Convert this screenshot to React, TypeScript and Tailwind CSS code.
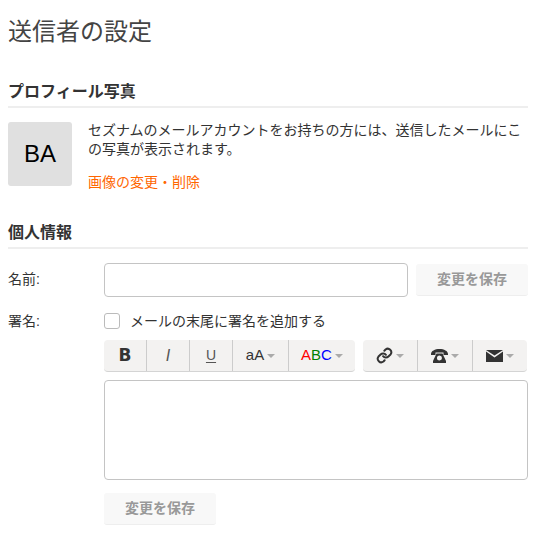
import React from "react";

const Caret = () => (
  <span className="ml-[3px] inline-block h-0 w-0 border-x-[4px] border-t-[4px] border-x-transparent border-t-[#aaaaaa]" />
);

const ToolBtn = ({ w, children, last }: { w: string; children: React.ReactNode; last?: boolean }) => (
  <div className={`flex h-full items-center justify-center ${w} ${last ? "" : "border-r border-[#cccccc]"}`}>{children}</div>
);

export default function App() {
  return (
    <div className="h-[536px] w-[536px] overflow-hidden bg-white pl-2 pr-2 text-[14px] text-[#333333] [font-family:'Liberation_Sans','Noto_Sans_CJK_JP',sans-serif]">
      <h1 className="pt-[17px] text-[24px] leading-[30px] font-normal text-[#444444]">送信者の設定</h1>

      <h2 className="mt-[32px] border-b-2 border-[#eeeeee] pb-[2px] text-[16px] leading-[25px] font-bold">プロフィール写真</h2>
      <div className="mt-[14px] flex gap-4">
        <div className="flex h-16 w-16 shrink-0 items-center justify-center rounded-[3px] bg-[#e0e0e0] text-[24px] text-black">BA</div>
        <div className="-mt-[1px]">
          <p className="leading-[19px]">セズナムのメールアカウントをお持ちの方には、送信したメールにこの写真が表示されます。</p>
          <p className="mt-[13px] leading-[20px] text-[#ff6600]">画像の変更・削除</p>
        </div>
      </div>

      <h2 className="mt-[28px] border-b-2 border-[#eeeeee] pb-[2px] text-[16px] leading-[25px] font-bold">個人情報</h2>

      <div className="mt-[14px] flex items-center">
        <div className="w-24 shrink-0 -translate-y-px">名前:</div>
        <div className="h-[34px] w-[304px] rounded-[4px] border border-[#c4c4c4] bg-white" />
        <button className="ml-2 h-8 w-28 rounded-[3px] border-b border-[#eeeeee] bg-[#f8f8f8] text-[14px] font-bold text-[#999999]">変更を保存</button>
      </div>

      <div className="mt-[14px] flex">
        <div className="w-24 shrink-0 leading-[20px]">署名:</div>
        <div className="flex w-[424px] flex-col">
          <div className="flex h-[20px] items-center">
            <span className="h-4 w-4 rounded-[3px] border border-[#bbbbbb] bg-white" />
            <span className="ml-[10px]">メールの末尾に署名を追加する</span>
          </div>
          <div className="mt-[9px] flex h-8 gap-2">
            <div className="flex h-full w-[251px] rounded-[4px] border-b border-[#d4d4d4] bg-[#f3f2f1]">
              <ToolBtn w="w-[43px]"><span className="text-[17px] font-bold [font-family:'DejaVu_Sans',sans-serif]">B</span></ToolBtn>
              <ToolBtn w="w-[43px]"><span className="text-[16px] text-[#555555] italic">I</span></ToolBtn>
              <ToolBtn w="w-[43px]"><span className="text-[#555555] underline underline-offset-2">U</span></ToolBtn>
              <ToolBtn w="w-[56px]"><span className="text-[15px]">aA</span><Caret /></ToolBtn>
              <ToolBtn w="w-[66px]" last>
                <span className="text-[15px]"><span className="text-[#ff0000]">A</span><span className="text-[#008000]">B</span><span className="text-[#0000ff]">C</span></span><Caret />
              </ToolBtn>
            </div>
            <div className="flex h-full w-[164px] rounded-[4px] border-b border-[#d4d4d4] bg-[#f3f2f1]">
              <ToolBtn w="w-[55px]">
                <svg width="17" height="17" viewBox="0 0 24 24" fill="none" stroke="#333333" strokeWidth="2.8" strokeLinecap="round" strokeLinejoin="round">
                  <path d="M10 13a5 5 0 0 0 7.500.5l3-3a5 5 0 0 0-7-7l-1.700 1.700" />
                  <path d="M14 11a5 5 0 0 0-7.500-.5l-3 3a5 5 0 0 0 7 7l1.700-1.700" />
                </svg>
                <Caret />
              </ToolBtn>
              <ToolBtn w="w-[55px]">
                <svg width="17" height="14" viewBox="0 0 17 14" fill="#333333">
                  <path d="M0 5C0 2 4 0 8.500 0S17 2 17 5v1h-4.500V3.500h-8V6H0z" />
                  <path d="M5.500 4.500h6L15 12v2H2v-2zM8.500 6.500a2.500 2.500 0 1 0 0 5 2.500 2.500 0 0 0 0-5z" fillRule="evenodd" />
                </svg>
                <Caret />
              </ToolBtn>
              <ToolBtn w="w-[54px]" last>
                <svg width="17" height="12" viewBox="0 0 17 12" fill="#333333">
                  <path d="M0 0h17L8.500 5.500z" />
                  <path d="M0 1.500l8.500 6 8.500-6V12H0z" />
                </svg>
                <Caret />
              </ToolBtn>
            </div>
          </div>
          <div className="mt-2 h-[100px] rounded-[4px] border border-[#c4c4c4] bg-white" />
          <button className="mt-[13px] h-8 w-28 rounded-[3px] border-b border-[#eeeeee] bg-[#f8f8f8] text-[14px] font-bold text-[#999999]">変更を保存</button>
        </div>
      </div>
    </div>
  );
}
